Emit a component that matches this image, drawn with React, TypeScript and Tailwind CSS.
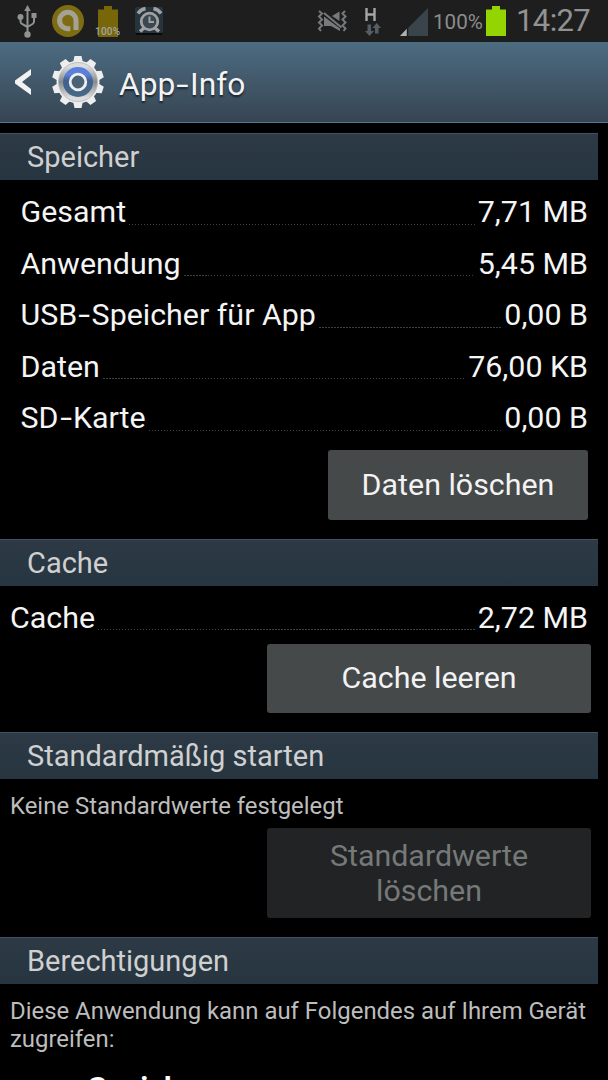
import type { ReactNode } from "react";

const storage = [
  { label: "Gesamt", value: "7,71 MB" },
  { label: "Anwendung", value: "5,45 MB" },
  { label: "USB-Speicher für App", value: "0,00 B" },
  { label: "Daten", value: "76,00 KB" },
  { label: "SD-Karte", value: "0,00 B" },
];

const teeth = [0, 36, 72, 108, 144, 180, 216, 252, 288, 324];

const UsbIcon = () => (
  <svg className="h-[34px] w-[22px]" viewBox="0 0 22 34" fill="none" stroke="#8f9192" strokeWidth="2">
    <path d="M10.500 5V29M3.500 11v5.500q0 1.500 1.500 2.500l5.500 3M17 11v5.500q0 1.500-1.500 2.500l-5 3" />
    <path d="M10.500 0l3.300 6h-6.600z" fill="#8f9192" stroke="none" />
    <circle cx="3.500" cy="12" r="3" fill="#8f9192" stroke="none" />
    <circle cx="10.500" cy="29.500" r="3.200" fill="#8f9192" stroke="none" />
    <path d="M14.500 8h5v5h-5z" fill="#8f9192" stroke="none" />
  </svg>
);

const AvastIcon = () => (
  <svg className="h-8 w-8" viewBox="0 0 32 32" fill="none">
    <circle cx="16" cy="16" r="16" fill="#7d6d12" />
    <path d="M24 25V15.500A8.200 8.200 0 1 0 15.800 23.700h2.500" stroke="#a5a195" strokeWidth="5" />
    <path d="M20 17.500V27" stroke="#7d6d12" strokeWidth="1.500" />
  </svg>
);

const ChargedIcon = () => (
  <div className="relative h-8 w-[26px]">
    <svg className="absolute top-0 left-[3px] h-[31px] w-5" viewBox="0 0 20 31">
      <path d="M6 0h8v3.500h6V31H0V3.500h6z" fill="#776709" />
    </svg>
    <span className="absolute top-[20px] left-0 text-[10px] leading-[12px] font-medium tracking-[0.200px] text-[#a5a5a5]">
      100%
    </span>
  </div>
);

const AlarmIcon = () => (
  <svg className="h-[30px] w-7" viewBox="0 0 28 30">
    <rect y="1" width="28" height="26" rx="2" fill="#26343d" />
    <path d="M1 28h26" stroke="#0a0a0a" strokeWidth="2" />
    <g fill="none" stroke="#a0a1a2">
      <path d="M9 22l-4 3.500M20 22l4 3.500" strokeWidth="3.500" />
      <circle cx="14.500" cy="15.500" r="8.300" fill="#3c4850" strokeWidth="2.800" />
      <path d="M14.500 10.500v5.500h4.500" strokeWidth="2" />
      <path d="M3 7.500q2.500-4 7.500-5M26 7.500q-2.500-4-7.500-5" strokeWidth="3.500" />
    </g>
  </svg>
);

const VibrateIcon = () => (
  <svg className="h-[22px] w-8" viewBox="0 0 32 22" fill="none" stroke="#777a7c">
    <path
      d="M2 1l3 2.500-3 3 3 3-3 3 3 3-3 3 2 2.500M28 1l-2.500 2.500 3 3-3 3 3 3-3 3 3 3-2 2.500"
      strokeWidth="2"
    />
    <path d="M7 6.500V16h7l9 5v-2.500zM15 6L22.500 1.500V11z" fill="#777a7c" stroke="none" />
    <path d="M7 3L24.500 17.500" strokeWidth="2" />
  </svg>
);

const DataIcon = () => (
  <div className="flex w-4 flex-col items-center">
    <svg className="mr-[5px] h-[13px] w-[11px]" viewBox="0 0 11 13">
      <path d="M1.500 0v13M9.500 0v13M1.500 6.500h8" stroke="#a4a5a5" strokeWidth="2.400" />
    </svg>
    <svg className="mt-0.5 h-[13px] w-4" viewBox="0 0 16 13" fill="#555e65">
      <path d="M2.500 1.500h3.500V8h3l-4.500 5L0 8h2.500zM10 10.500h3.500V5H16l-4.300-5-4.200 5H10z" />
    </svg>
  </div>
);

const SignalIcon = () => (
  <svg className="h-7 w-7" viewBox="0 0 28 28">
    <path d="M28 0v28H0z" fill="#3a444b" />
    <path d="M7 20.500v7.500H0z" fill="#b0b2b2" />
    <path d="M7.500 19v9" stroke="#1e1e1e" strokeWidth="1.500" />
  </svg>
);

const BatteryIcon = () => (
  <svg className="h-[30px] w-5" viewBox="0 0 20 30">
    <path d="M6 0h8v3.500h6V30H0V3.500h6z" fill="#94d400" />
  </svg>
);

const GearIcon = () => (
  <svg className="h-[54px] w-[52px]" viewBox="-26 -27 52 54">
    <defs>
      <linearGradient id="ring" x1="0" y1="0" x2="0" y2="1">
        <stop offset="0.100" stopColor="#dcdddd" />
        <stop offset="0.500" stopColor="#858a8c" />
        <stop offset="0.900" stopColor="#dcdddd" />
      </linearGradient>
      <linearGradient id="core" x1="0" y1="0" x2="0" y2="1">
        <stop offset="0.250" stopColor="#5b80dc" />
        <stop offset="0.450" stopColor="#41618f" />
        <stop offset="1" stopColor="#456a84" />
      </linearGradient>
    </defs>
    <g fill="#eeeeee">
      {teeth.map((angle) => (
        <path key={angle} d="M-5-19L-3.500-26H3.500L5-19z" transform={`rotate(${angle})`} />
      ))}
      <circle r="21.500" />
    </g>
    <circle r="19.500" fill="url(#ring)" stroke="#b5b8b9" strokeWidth="0.800" />
    <circle r="15" fill="url(#core)" />
    <circle r="7.800" fill="#4c6277" stroke="#efefef" strokeWidth="2.800" />
  </svg>
);

// Roboto's hyphen is short, so it is stretched and given a wider advance
const Label = ({ text }: { text: string }) => (
  <>
    {text.split("-").map((part, i) => (
      <span key={i}>
        {i > 0 && <span className="mx-[3px] inline-block scale-x-140">-</span>}
        {part}
      </span>
    ))}
  </>
);

const StatusBar = () => (
  <div className="flex h-[42px] items-start bg-[#1e1e1e]">
    <div className="mt-[5px] ml-[17px]">
      <UsbIcon />
    </div>
    <div className="mt-[5px] ml-[13px]">
      <AvastIcon />
    </div>
    <div className="mt-[6px] ml-[11px]">
      <ChargedIcon />
    </div>
    <div className="mt-[6px] ml-[14px]">
      <AlarmIcon />
    </div>
    <div className="mt-[10px] ml-auto">
      <VibrateIcon />
    </div>
    <div className="mt-[8px] mr-[19px] ml-[16px]">
      <DataIcon />
    </div>
    <div className="mt-[8px]">
      <SignalIcon />
    </div>
    <span className="mt-[10px] ml-[5px] w-[51px] text-[20.600px] leading-6 whitespace-nowrap text-[#8d8d8d]">100%</span>
    <div className="mt-[6px] ml-[2px]">
      <BatteryIcon />
    </div>
    <span className="mt-[3px] mr-[17px] ml-[10px] w-[75px] text-[31px] leading-9 tracking-[-0.600px] whitespace-nowrap text-[#929292]">
      14:27
    </span>
  </div>
);

const TitleBar = () => (
  <div className="flex h-[81px] items-center border-b border-[#527793] bg-linear-to-b from-[#4d6c82] to-[#364552]">
    <svg className="ml-[14px] h-[26px] w-[18px]" viewBox="0 0 18 26">
      <path d="M17 0v6L8 13l9 7v6L1 14.500v-3z" fill="#f2f2f2" />
    </svg>
    <div className="ml-5">
      <GearIcon />
    </div>
    <h1 className="ml-[15px] pt-1.5 text-[31.700px] whitespace-nowrap text-[#f3f3f3] [text-shadow:0_2px_2px_#17212b]">
      <Label text="App-Info" />
    </h1>
  </div>
);

const SectionHeader = ({ children }: { children: ReactNode }) => (
  <h2 className="mr-[10px] h-[47px] border-t border-[#3f5363] bg-linear-to-b from-[#2d3a46] to-[#263540] pl-[27px] text-[29px] leading-[46px] text-[#d0d0d0]">
    {children}
  </h2>
);

const Row = ({ label, value }: { label: string; value: string }) => (
  <div className="flex h-[51.500px] text-[30.400px] leading-[50px] whitespace-nowrap text-[#f5f5f5]">
    <span>
      <Label text={label} />
    </span>
    <div className="mx-[3px] mt-[36.500px] h-px flex-1 bg-[repeating-linear-gradient(to_right,#3a4044_0_1.500px,transparent_1.500px_3px)]" />
    <span>{value}</span>
  </div>
);

const App = () => {
  return (
    <div className="h-[1080px] w-[608px] overflow-hidden bg-black font-[Roboto,sans-serif]">
      <StatusBar />
      <TitleBar />

      <section className="mt-[10px]">
        <SectionHeader>Speicher</SectionHeader>
        <div className="mt-[7px] pr-5 pl-[20.500px]">
          {storage.map((row) => (
            <Row key={row.label} {...row} />
          ))}
          <button className="mt-[5.500px] ml-auto block h-[69.500px] w-[260px] rounded-[3px] bg-[#45494a] text-[30.400px] text-[#f3f3f3]">
            Daten löschen
          </button>
        </div>
      </section>

      <section className="mt-[19px]">
        <SectionHeader>Cache</SectionHeader>
        <div className="mt-[7px] pr-5 pl-[10px]">
          <Row label="Cache" value="2,72 MB" />
        </div>
        <button className="mr-[17px] ml-auto block h-[69px] w-[324px] rounded-[3px] bg-[#45494a] pb-0.5 text-[30.400px] text-[#f3f3f3]">
          Cache leeren
        </button>
      </section>

      <section className="mt-[19px]">
        <SectionHeader>Standardmäßig starten</SectionHeader>
        <p className="mt-[13px] ml-[10px] text-[23.920px] leading-7 text-[#bdbdbd]">Keine Standardwerte festgelegt</p>
        <button
          disabled
          className="mt-[8px] mr-[17px] ml-auto block h-[90px] w-[324px] rounded-[3px] bg-[#222324] px-8 text-[30.400px] leading-[35.500px] text-[#76797a]"
        >
          Standardwerte löschen
        </button>
      </section>

      <section className="mt-[19px]">
        <SectionHeader>Berechtigungen</SectionHeader>
        <p className="mt-[13px] ml-[10px] text-[23.920px] leading-7 whitespace-nowrap text-[#bdbdbd]">
          Diese Anwendung kann auf Folgendes auf Ihrem Gerät
          <br />
          zugreifen:
        </p>
        <h3 className="mt-[17px] ml-[88px] text-[30.400px] leading-9 font-bold text-white">Speicher</h3>
      </section>
    </div>
  );
};

export default App;
